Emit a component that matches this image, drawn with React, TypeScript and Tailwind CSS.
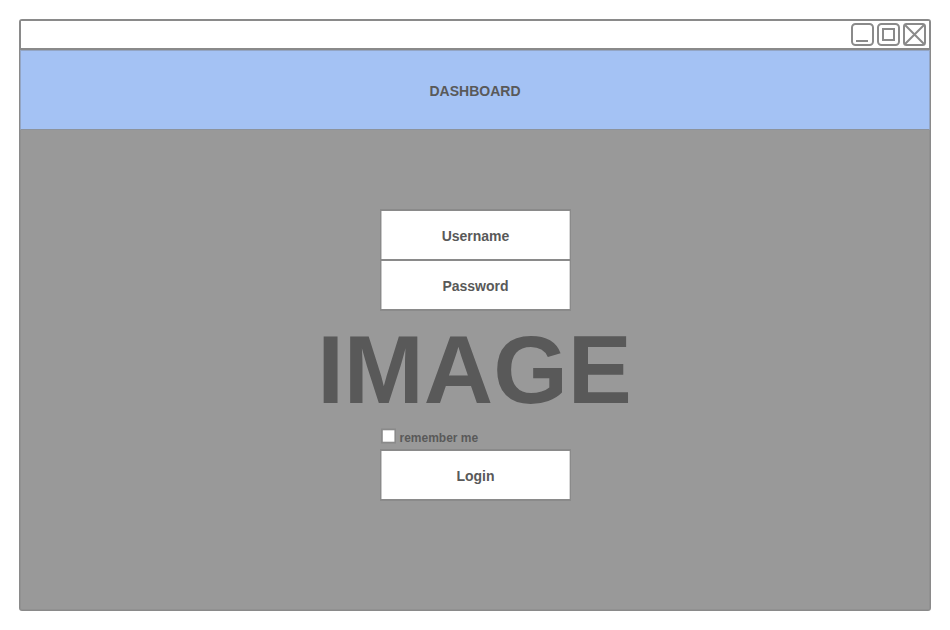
import type { ReactNode } from 'react';

function WindowControls() {
  return (
    <svg width="76" height="24" viewBox="0 0 76 24" fill="none" stroke="#8a8a8a" strokeWidth="2">
      <rect x="2" y="2" width="21" height="21" rx="3.5" />
      <path d="M6 19H18" />
      <rect x="28" y="2" width="21" height="21" rx="3.5" />
      <rect x="33" y="7" width="11" height="11" />
      <rect x="54" y="2" width="21" height="21" rx="2.5" />
      <path d="M55 3L74 22M74 3L55 22" />
    </svg>
  );
}

function Box({ children, className = '' }: { children: ReactNode; className?: string }) {
  return (
    <div
      className={`flex w-full items-center justify-center border-x border-y-2 border-[#8a8a8a] bg-white pt-0.5 pl-px text-sm font-bold shadow-[inset_1px_0_0_#c8c8c8,inset_-1px_0_0_#d8d8d8] ${className}`}
    >
      {children}
    </div>
  );
}

export default function App() {
  return (
    <div className="h-[630px] w-[950px] bg-white p-[19px] font-['Liberation_Sans',Arial,sans-serif] text-[#595959]">
      <div className="flex h-[592px] w-[912px] flex-col rounded-[3px] border-2 border-[#8a8a8a]">
        <header className="flex h-[29px] shrink-0 justify-end border-b-2 border-[#8a8a8a] bg-white pr-[3px] pt-px">
          <WindowControls />
        </header>
        <div className="-mx-px flex h-20 shrink-0 items-center justify-center border border-[#93a5c4] border-b-[#8d939c] bg-[#a4c2f4] pt-0.5 text-sm font-bold">
          DASHBOARD
        </div>
        <main className="relative -mx-px -mb-px flex flex-1 justify-center rounded-b-[2px] border-x border-b border-[#919191] bg-[#999999] pt-[79px]">
          <div className="absolute inset-x-0 top-0 flex h-[480px] items-center justify-center pr-px text-[96px] leading-none font-bold">
            IMAGE
          </div>
          <form className="relative flex w-[191px] flex-col">
            <Box className="h-[52px]">Username</Box>
            <Box className="-mt-0.5 h-[52px]">Password</Box>
            <label className="mt-[117px] flex h-[21px] items-start pl-px text-xs font-bold">
              <svg className="mr-1 shrink-0" width="15" height="16" viewBox="0 0 15 16">
                <rect x="0.9" y="1.4" width="13.4" height="13.2" fill="#ffffff" stroke="#8a8a8a" strokeWidth="1.8" />
              </svg>
              <span className="pt-0.5">remember me</span>
            </label>
            <Box className="h-[52px]">Login</Box>
          </form>
        </main>
      </div>
    </div>
  );
}
